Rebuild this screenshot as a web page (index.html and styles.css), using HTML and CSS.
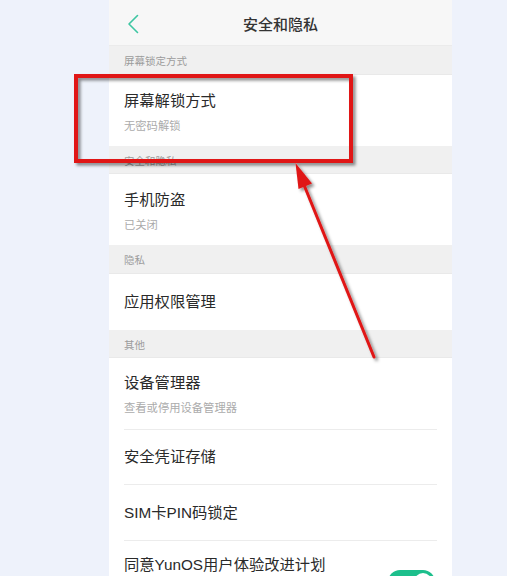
FILE: index.html
```html
<!DOCTYPE html>
<html lang="zh-CN">
<head>
<meta charset="utf-8">
<title>安全和隐私</title>
<link rel="stylesheet" href="styles.css">
</head>
<body>
<div class="page">
  <div class="phone">
    <header class="topbar">
      <svg class="back" width="14" height="20" viewBox="0 0 14 20"><path d="M11.5 1.5 L3 10 L11.5 18.5" fill="none" stroke="#3ec6a2" stroke-width="1.6" stroke-linecap="round" stroke-linejoin="round"/></svg>
      <h1 class="title-bar">安全和隐私</h1>
    </header>

    <div class="section">屏幕锁定方式</div>
    <div class="item two">
      <div class="title">屏幕解锁方式</div>
      <div class="sub">无密码解锁</div>
    </div>

    <div class="section">安全和隐私</div>
    <div class="item two">
      <div class="title">手机防盗</div>
      <div class="sub">已关闭</div>
    </div>

    <div class="section">隐私</div>
    <div class="item one">
      <div class="title">应用权限管理</div>
    </div>

    <div class="section">其他</div>
    <div class="group">
      <div class="item two">
        <div class="title">设备管理器</div>
        <div class="sub">查看或停用设备管理器</div>
      </div>
      <div class="item one short">
        <div class="title">安全凭证存储</div>
      </div>
      <div class="item one mid">
        <div class="title">SIM卡PIN码锁定</div>
      </div>
      <div class="item toggle-row">
        <div class="title">同意YunOS用户体验改进计划</div>
        <div class="toggle"><span class="knob"></span></div>
      </div>
    </div>
  </div>

  <svg class="annot" width="507" height="576" viewBox="0 0 507 576">
    <defs>
      <filter id="sh" x="-20%" y="-20%" width="140%" height="140%">
        <feDropShadow dx="2.5" dy="2.5" stdDeviation="1.6" flood-color="#000" flood-opacity="0.45"/>
      </filter>
    </defs>
    <g filter="url(#sh)">
      <rect x="76" y="76" width="275" height="85" fill="none" stroke="#e01616" stroke-width="4"/>
      <line x1="302" y1="180" x2="374" y2="357" stroke="#e01616" stroke-width="3" stroke-linecap="round"/>
      <polygon points="295.5,163 312,183.5 298.5,189" fill="#e01616"/>
    </g>
  </svg>
</div>
</body>
</html>
```

FILE: styles.css
```css
html, body {
  margin: 0;
  padding: 0;
  overflow: hidden;
}
body {
  width: 507px;
  height: 576px;
  background: #eef2fb;
  font-family: "Noto Sans CJK SC", "Noto Sans", "Liberation Sans", sans-serif;
  color: #333;
}
.page {
  position: relative;
  width: 507px;
  height: 576px;
  padding-left: 109px;
  box-sizing: border-box;
}
.phone {
  width: 343px;
  height: 576px;
  background: #ffffff;
  overflow: hidden;
}
.topbar {
  position: relative;
  height: 46px;
  box-sizing: border-box;
  background: #f7f7f7;
  border-bottom: 1px solid #ebebeb;
  display: flex;
  align-items: center;
  justify-content: center;
}
.back {
  position: absolute;
  left: 17px;
  top: 14px;
}
.title-bar {
  margin: 0;
  font-size: 15px;
  font-weight: 500;
  color: #333;
  line-height: 20px;
  padding-top: 2px;
}
.section {
  height: 28.5px;
  box-sizing: border-box;
  background: #f0f0f0;
  border-bottom: 1px solid #e9e9e9;
  display: flex;
  align-items: center;
  padding-left: 15px;
  padding-top: 2px;
  font-size: 10.5px;
  color: #9c9c9c;
}
.item {
  background: #fff;
  padding-left: 15px;
  box-sizing: border-box;
}
.title {
  font-family: "Liberation Sans", "Noto Sans CJK SC", sans-serif;
  font-size: 15.3px;
  line-height: 20px;
  color: #2a2a2a;
}
.sub {
  font-size: 11.3px;
  line-height: 16px;
  color: #ababab;
  margin-top: 6px;
}
.item.two {
  height: 71px;
  padding-top: 16px;
}
.item.one {
  height: 56px;
  display: flex;
  align-items: center;
}
.group .item {
  margin: 0 15px;
  padding-left: 0;
}
.group .item.two,
.group .item.one {
  border-bottom: 1px solid #ececec;
}
.group .item.two {
  height: 72px;
  padding-top: 15px;
}
.group .item.short {
  height: 55px;
}
.group .item.mid {
  height: 56px;
}
.toggle-row {
  display: flex;
  justify-content: space-between;
  align-items: flex-start;
  padding-top: 14px;
  height: 60px;
}
.toggle {
  width: 47px;
  height: 24px;
  border-radius: 12px;
  background: #1dbf8c;
  margin-top: 15px;
  margin-right: 2px;
  position: relative;
}
.knob {
  position: absolute;
  right: 3px;
  top: 3px;
  width: 18px;
  height: 18px;
  border-radius: 50%;
  background: #fff;
}
.annot {
  position: absolute;
  left: 0;
  top: 0;
  pointer-events: none;
}
```
